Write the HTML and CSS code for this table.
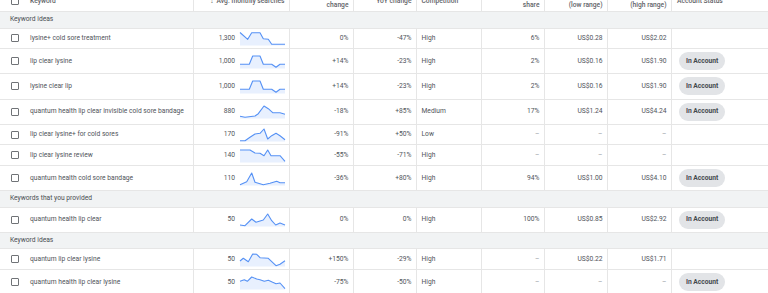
FILE: index.html
```html
<!DOCTYPE html>
<html lang="en">
<head>
<meta charset="utf-8">
<title>Keyword ideas</title>
<link rel="stylesheet" href="styles.css">
</head>
<body>
<div class="table">
  <div class="tr head">
    <div class="kw"><span class="cb"></span><span>Keyword</span></div>
    <div class="num"><span class="arrow">&#8595;</span>Avg. monthly searches</div>
    <div class="num">Three month<br>change</div>
    <div class="num">YoY change</div>
    <div class="txt">Competition</div>
    <div class="num">Ad impression<br>share</div>
    <div class="num">Top of page bid<br>(low range)</div>
    <div class="num">Top of page bid<br>(high range)</div>
    <div class="txt">Account Status</div>
  </div>

  <div class="group">Keyword ideas</div>

  <div class="tr">
    <div class="kw"><span class="cb"></span><span>lysine+ cold sore treatment</span></div>
    <div class="num"><span>1,300</span><svg class="spark" viewBox="0 0 45 13" width="45" height="13"><polygon class="area" points="0,0.5 7.7,7.3 11.7,0.7 20,0.7 23.3,6.7 28.3,7.3 31.7,12.3 45,12.3 45,13.5 0,13.5"/><polyline class="line" points="0,0.5 7.7,7.3 11.7,0.7 20,0.7 23.3,6.7 28.3,7.3 31.7,12.3 45,12.3"/></svg></div>
    <div class="num">0%</div>
    <div class="num">-47%</div>
    <div class="txt">High</div>
    <div class="num">6%</div>
    <div class="num">US$0.28</div>
    <div class="num">US$2.02</div>
    <div class="txt status"></div>
  </div>

  <div class="tr tall">
    <div class="kw"><span class="cb"></span><span>lip clear lysine</span></div>
    <div class="num"><span>1,000</span><svg class="spark" viewBox="0 0 45 13" width="45" height="13"><polygon class="area" points="0,9.3 9.3,9.3 12.7,1 20,1 23.3,9.3 31.7,9.3 36,12.3 40,9.3 45,9.3 45,13.5 0,13.5"/><polyline class="line" points="0,9.3 9.3,9.3 12.7,1 20,1 23.3,9.3 31.7,9.3 36,12.3 40,9.3 45,9.3"/></svg></div>
    <div class="num">+14%</div>
    <div class="num">-23%</div>
    <div class="txt">High</div>
    <div class="num">2%</div>
    <div class="num">US$0.16</div>
    <div class="num">US$1.90</div>
    <div class="txt status"><span class="chip">In Account</span></div>
  </div>

  <div class="tr tall">
    <div class="kw"><span class="cb"></span><span>lysine clear lip</span></div>
    <div class="num"><span>1,000</span><svg class="spark" viewBox="0 0 45 13" width="45" height="13"><polygon class="area" points="0,9.3 9.3,9.3 12.7,1 20,1 23.3,9.3 31.7,9.3 36,12.3 40,9.3 45,9.3 45,13.5 0,13.5"/><polyline class="line" points="0,9.3 9.3,9.3 12.7,1 20,1 23.3,9.3 31.7,9.3 36,12.3 40,9.3 45,9.3"/></svg></div>
    <div class="num">+14%</div>
    <div class="num">-23%</div>
    <div class="txt">High</div>
    <div class="num">2%</div>
    <div class="num">US$0.16</div>
    <div class="num">US$1.90</div>
    <div class="txt status"><span class="chip">In Account</span></div>
  </div>

  <div class="tr tall">
    <div class="kw"><span class="cb"></span><span>quantum health lip clear invisible cold sore bandage</span></div>
    <div class="num"><span>880</span><svg class="spark" viewBox="0 0 45 13" width="45" height="13"><polygon class="area" points="0,11.3 5,12.3 15,11 18.3,8.7 24,1 28.3,3.7 32.7,7.7 40,7.7 45,9.3 45,13.5 0,13.5"/><polyline class="line" points="0,11.3 5,12.3 15,11 18.3,8.7 24,1 28.3,3.7 32.7,7.7 40,7.7 45,9.3"/></svg></div>
    <div class="num">-18%</div>
    <div class="num">+85%</div>
    <div class="txt">Medium</div>
    <div class="num">17%</div>
    <div class="num">US$1.24</div>
    <div class="num">US$4.24</div>
    <div class="txt status"><span class="chip">In Account</span></div>
  </div>

  <div class="tr">
    <div class="kw"><span class="cb"></span><span>lip clear lysine+ for cold sores</span></div>
    <div class="num"><span>170</span><svg class="spark" viewBox="0 0 45 13" width="45" height="13"><polygon class="area" points="0,12.7 5,12.7 10,9.3 15,6 20,5.3 24,1 27.7,11 31.7,7.7 36,5.3 40,7.7 45,11.7 45,13.5 0,13.5"/><polyline class="line" points="0,12.7 5,12.7 10,9.3 15,6 20,5.3 24,1 27.7,11 31.7,7.7 36,5.3 40,7.7 45,11.7"/></svg></div>
    <div class="num">-91%</div>
    <div class="num">+50%</div>
    <div class="txt">Low</div>
    <div class="num dash">&#8211;</div>
    <div class="num dash">&#8211;</div>
    <div class="num dash">&#8211;</div>
    <div class="txt status"></div>
  </div>

  <div class="tr">
    <div class="kw"><span class="cb"></span><span>lip clear lysine review</span></div>
    <div class="num"><span>140</span><svg class="spark" viewBox="0 0 45 13" width="45" height="13"><polygon class="area" points="0,1 10,1 15,4 20,4.3 24,6.7 27.7,1 31,6.7 40,6.7 45,12.3 45,13.5 0,13.5"/><polyline class="line" points="0,1 10,1 15,4 20,4.3 24,6.7 27.7,1 31,6.7 40,6.7 45,12.3"/></svg></div>
    <div class="num">-55%</div>
    <div class="num">-71%</div>
    <div class="txt">High</div>
    <div class="num dash">&#8211;</div>
    <div class="num dash">&#8211;</div>
    <div class="num dash">&#8211;</div>
    <div class="txt status"></div>
  </div>

  <div class="tr tall">
    <div class="kw"><span class="cb"></span><span>quantum health cold sore bandage</span></div>
    <div class="num"><span>110</span><svg class="spark" viewBox="0 0 45 13" width="45" height="13"><polygon class="area" points="0,12.7 6.7,9.7 11.7,1 15,10.3 23.3,12.7 30,11.3 36.7,9.3 40,10.7 45,10.7 45,13.5 0,13.5"/><polyline class="line" points="0,12.7 6.7,9.7 11.7,1 15,10.3 23.3,12.7 30,11.3 36.7,9.3 40,10.7 45,10.7"/></svg></div>
    <div class="num">-36%</div>
    <div class="num">+80%</div>
    <div class="txt">High</div>
    <div class="num">94%</div>
    <div class="num">US$1.00</div>
    <div class="num">US$4.10</div>
    <div class="txt status"><span class="chip">In Account</span></div>
  </div>

  <div class="group">Keywords that you provided</div>

  <div class="tr tall">
    <div class="kw"><span class="cb"></span><span>quantum health lip clear</span></div>
    <div class="num"><span>50</span><svg class="spark" viewBox="0 0 45 13" width="45" height="13"><polygon class="area" points="0,12 5,12.7 11.7,6 16,9.3 23.3,7 27.7,1 31.7,7.7 35.7,12 40,10 45,12 45,13.5 0,13.5"/><polyline class="line" points="0,12 5,12.7 11.7,6 16,9.3 23.3,7 27.7,1 31.7,7.7 35.7,12 40,10 45,12"/></svg></div>
    <div class="num">0%</div>
    <div class="num">0%</div>
    <div class="txt">High</div>
    <div class="num">100%</div>
    <div class="num">US$0.85</div>
    <div class="num">US$2.92</div>
    <div class="txt status"><span class="chip">In Account</span></div>
  </div>

  <div class="group">Keyword ideas</div>

  <div class="tr">
    <div class="kw"><span class="cb"></span><span>quantum lip clear lysine</span></div>
    <div class="num"><span>50</span><svg class="spark" viewBox="0 0 45 13" width="45" height="13"><polygon class="area" points="0,8 3.3,5.3 8.3,8.7 12.7,1 16.7,1.3 20,4.7 28.3,5.3 36,12.7 40,11.3 45,7.7 45,13.5 0,13.5"/><polyline class="line" points="0,8 3.3,5.3 8.3,8.7 12.7,1 16.7,1.3 20,4.7 28.3,5.3 36,12.7 40,11.3 45,7.7"/></svg></div>
    <div class="num">+150%</div>
    <div class="num">-29%</div>
    <div class="txt">High</div>
    <div class="num dash">&#8211;</div>
    <div class="num">US$0.22</div>
    <div class="num">US$1.71</div>
    <div class="txt status"></div>
  </div>

  <div class="tr tall">
    <div class="kw"><span class="cb"></span><span>quantum health lip clear lysine</span></div>
    <div class="num"><span>50</span><svg class="spark" viewBox="0 0 45 13" width="45" height="13"><polygon class="area" points="0,5.3 4.3,3.7 7.3,5.3 11.7,1 16.7,3 20,3.7 24.3,5.3 28.3,4.3 32.7,6.3 36,7.7 40,7 45,12.7 45,13.5 0,13.5"/><polyline class="line" points="0,5.3 4.3,3.7 7.3,5.3 11.7,1 16.7,3 20,3.7 24.3,5.3 28.3,4.3 32.7,6.3 36,7.7 40,7 45,12.7"/></svg></div>
    <div class="num">-75%</div>
    <div class="num">-50%</div>
    <div class="txt">High</div>
    <div class="num dash">&#8211;</div>
    <div class="num dash">&#8211;</div>
    <div class="num dash">&#8211;</div>
    <div class="txt status"><span class="chip">In Account</span></div>
  </div>
</div>
</body>
</html>
```

FILE: styles.css
```css
html, body {
  margin: 0;
  padding: 0;
  background: #ffffff;
}

body {
  font-family: Roboto, "Liberation Sans", Arial, sans-serif;
  font-size: 6.7px;
  line-height: 9px;
  color: #50545a;
  overflow: hidden;
}

.table {
  width: 768px;
  margin-top: -9px;
}

.tr {
  display: grid;
  grid-template-columns: 193px 96px 64px 63px 65px 63px 63px 64px 97px;
  box-sizing: border-box;
  height: 20.5px;
  border-bottom: 1px solid #e6e6e6;
}

.tr.tall {
  height: 25.3px;
}

.tr > div {
  display: flex;
  align-items: center;
  box-sizing: border-box;
  min-width: 0;
  padding: 0 4.5px;
  border-left: 1px solid #e6e6e6;
  white-space: nowrap;
}

.tr > div:first-child {
  border-left: 0;
}

.num {
  justify-content: flex-end;
  text-align: right;
}

.txt {
  justify-content: flex-start;
}

.kw.kw {
  padding-left: 11px;
}

.cb {
  flex: none;
  width: 8px;
  height: 8px;
  box-sizing: border-box;
  border: 1.2px solid #707377;
  border-radius: 1px;
  margin-right: 11px;
}

.head {
  height: 21px;
  color: #5f6368;
  font-weight: 500;
}

.arrow {
  font-weight: 400;
  margin-right: 3px;
}

.spark {
  flex: none;
  margin-left: 4.5px;
  overflow: visible;
}

.spark .area {
  fill: #e8f0fe;
  stroke: none;
}

.spark .line {
  fill: none;
  stroke: #5591f5;
  stroke-width: 1.1;
  stroke-linejoin: round;
}

.dash {
  color: #9aa0a6;
}

.tr > .status {
  padding-left: 7px;
}

.head > .txt:last-child {
  padding-left: 5px;
}

.chip {
  display: flex;
  align-items: center;
  height: 18px;
  padding: 0 7px;
  border-radius: 9px;
  background: #e2e4e7;
  font-weight: 700;
  color: #44484d;
}

.group {
  box-sizing: border-box;
  height: 16.5px;
  display: flex;
  align-items: center;
  padding-left: 10px;
  background: #f1f3f4;
  border-bottom: 1px solid #e6e6e6;
  color: #4a4e53;
}
```
